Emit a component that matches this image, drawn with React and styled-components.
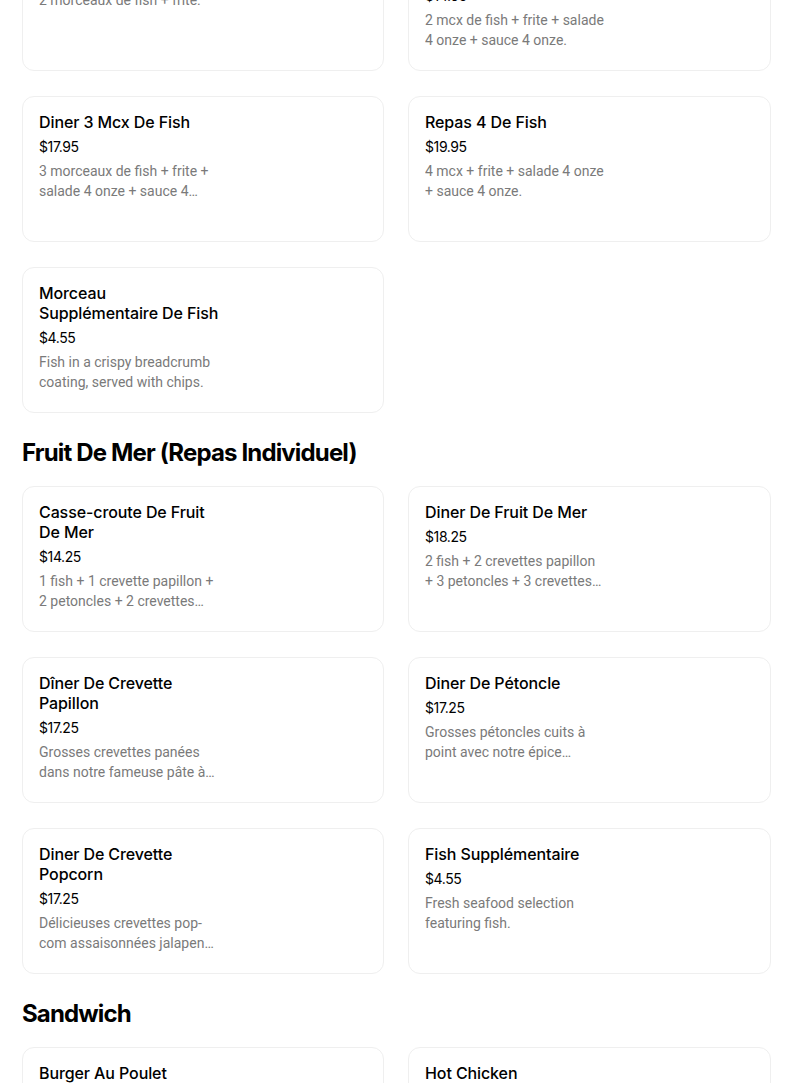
import React from "react";
import styled, { createGlobalStyle } from "styled-components";

const GlobalStyle = createGlobalStyle`
  html, body {
    margin: 0;
    padding: 0;
    background: #ffffff;
  }
  body {
    font-family: Inter, "Noto Sans", "Liberation Sans", sans-serif;
    color: #000000;
    overflow: hidden;
  }
`;

const sections = [
  {
    title: null,
    items: [
      {
        name: "Diner 2 Mcx De Fish",
        price: "$14.95",
        desc: "2 morceaux de fish + frite.",
      },
      {
        name: "Repas 2 Mcx De Fish Avec Salade",
        price: "$14.95",
        desc: "2 mcx de fish + frite + salade 4 onze + sauce 4 onze.",
      },
      {
        name: "Diner 3 Mcx De Fish",
        price: "$17.95",
        desc: "3 morceaux de fish + frite + salade 4 onze + sauce 4 onze.",
      },
      {
        name: "Repas 4 De Fish",
        price: "$19.95",
        desc: "4 mcx + frite + salade 4 onze + sauce 4 onze.",
      },
      {
        name: "Morceau Supplémentaire De Fish",
        price: "$4.55",
        desc: "Fish in a crispy breadcrumb coating, served with chips.",
      },
    ],
  },
  {
    title: "Fruit De Mer (Repas Individuel)",
    items: [
      {
        name: "Casse-croute De Fruit De Mer",
        price: "$14.25",
        desc: "1 fish + 1 crevette papillon + 2 petoncles + 2 crevettes popcorn + frite.",
      },
      {
        name: "Diner De Fruit De Mer",
        price: "$18.25",
        desc: "2 fish + 2 crevettes papillon + 3 petoncles + 3 crevettes popcorn + frite.",
      },
      {
        name: "Dîner De Crevette Papillon",
        price: "$17.25",
        desc: "Grosses crevettes panées dans notre fameuse pâte à fish.",
      },
      {
        name: "Diner De Pétoncle",
        price: "$17.25",
        desc: "Grosses pétoncles cuits à point avec notre épice maison.",
      },
      {
        name: "Diner De Crevette Popcorn",
        price: "$17.25",
        desc: "Délicieuses crevettes pop-com assaisonnées jalapeno et fromage.",
      },
      {
        name: "Fish Supplémentaire",
        price: "$4.55",
        desc: "Fresh seafood selection featuring fish.",
      },
    ],
  },
  {
    title: "Sandwich",
    items: [
      { name: "Burger Au Poulet", price: "$9.95", desc: "Burger au poulet croustillant." },
      { name: "Hot Chicken", price: "$15.95", desc: "Hot chicken avec sauce brune." },
    ],
  },
];

const App = () => {
  return (
    <>
      <GlobalStyle />
      <Page>
        {sections.map((section, i) => (
          <Section key={i}>
            {section.title && <Heading>{section.title}</Heading>}
            <Grid>
              {section.items.map((item) => (
                <Card key={item.name}>
                  <Info>
                    <Name>{item.name}</Name>
                    <Price>{item.price}</Price>
                    <Desc>{item.desc}</Desc>
                  </Info>
                </Card>
              ))}
            </Grid>
          </Section>
        ))}
      </Page>
    </>
  );
};

const Page = styled.main`
  width: 749px;
  margin-top: -75px;
  padding-left: 22px;
  display: flex;
  flex-direction: column;
`;

const Section = styled.section`
  display: flex;
  flex-direction: column;
  & + & {
    margin-top: 24px;
  }
`;

const Heading = styled.h2`
  margin: 0 0 17px;
  font-size: 24px;
  line-height: 32px;
  font-weight: 700;
  letter-spacing: -0.85px;
  color: #000000;
`;

const Grid = styled.div`
  display: grid;
  grid-template-columns: 362px 363px;
  column-gap: 24px;
  row-gap: 25px;
`;

const Card = styled.div`
  box-sizing: border-box;
  height: 146px;
  border: 1px solid #efefef;
  border-radius: 12px;
  padding: 15px 16px;
  display: flex;
  background: #ffffff;
`;

const Info = styled.div`
  width: 184px;
  display: flex;
  flex-direction: column;
`;

const Name = styled.div`
  font-size: 16px;
  line-height: 20px;
  font-weight: 500;
  letter-spacing: -0.1px;
  color: #000000;
`;

const Price = styled.div`
  margin-top: 5px;
  font-size: 14px;
  line-height: 20px;
  color: #000000;
  letter-spacing: -0.4px;
`;

const Desc = styled.div`
  margin-top: 4px;
  width: 180px;
  font-family: Roboto, "Liberation Sans", sans-serif;
  font-size: 14px;
  line-height: 20px;
  color: #7a7a7a;
  display: -webkit-box;
  -webkit-line-clamp: 2;
  -webkit-box-orient: vertical;
  overflow: hidden;
`;

export default App;
